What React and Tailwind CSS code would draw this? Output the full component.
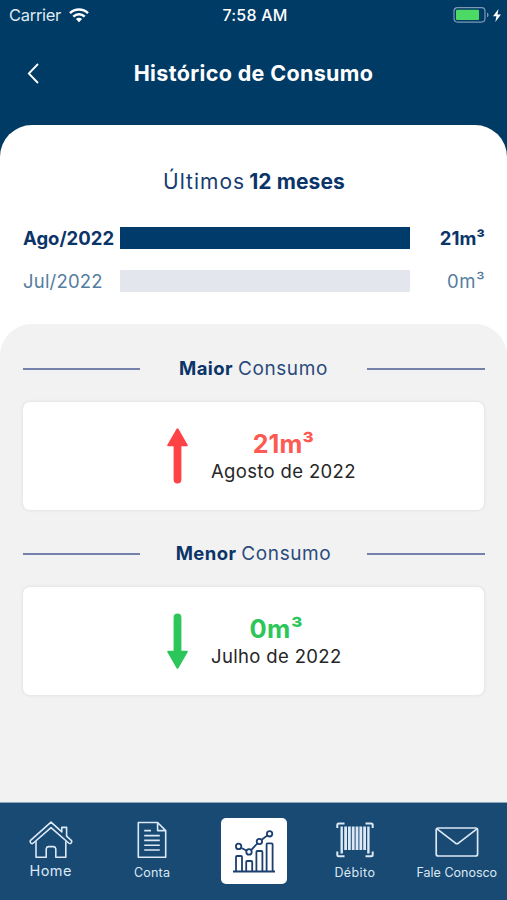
const meses = [
  { mes: "Ago/2022", valor: 21, destaque: true },
  { mes: "Jul/2022", valor: 0, destaque: false },
];

function StatusBar() {
  return (
    <div className="grid h-[30px] grid-cols-3 items-center pl-[9px] pr-[6px] text-white">
      <div className="flex items-center gap-[8px]">
        <span className="font-[Inter] text-[16.5px] leading-5 tracking-[-0.3px] text-[#dfe9f3]">Carrier</span>
        <svg width="20" height="15" viewBox="0 0 20 15" fill="none" stroke="#fff" strokeWidth="2.5">
          <path d="M1 5.2C6 .4 14 .4 19 5.2" />
          <path d="M4.3 8.6C7.5 5.5 12.5 5.5 15.7 8.6" />
          <path d="M6.9 11.1C8.7 9.4 11.3 9.4 13.1 11.1L10 14.3Z" fill="#fff" stroke="none" />
        </svg>
      </div>
      <span className="whitespace-nowrap text-center font-[Inter] text-[16px] font-medium leading-5 tracking-[0.2px]">7:58 AM</span>
      <div className="flex items-center justify-end gap-[3px]">
        <svg width="37" height="16" viewBox="0 0 37 16">
          <rect x="1" y=".7" width="31" height="14.4" rx="3.5" fill="none" stroke="#7c99b3" strokeWidth="1.2" />
          <rect x="3" y="2.7" width="23" height="10.4" rx="1" fill="#4cd964" />
          <path d="M34 5.5C36 6.3 36 9.5 34 10.3Z" fill="#7c99b3" />
        </svg>
        <svg width="8" height="13" viewBox="0 0 8 13" fill="#fff">
          <path d="M5.5 0L0 7.2H3.4L2.3 13L8 5.4H4.5Z" />
        </svg>
      </div>
    </div>
  );
}

function LinhaMes({ mes, valor, destaque }) {
  return (
    <div className="flex h-[22px] items-center">
      <span className={destaque
        ? "w-[97px] whitespace-nowrap text-[18.5px] font-bold leading-[22px] text-[#0b3568]"
        : "w-[97px] whitespace-nowrap text-[18.5px] leading-[22px] tracking-[0.2px] text-[#557d9f]"}>
        {mes}
      </span>
      <div className={destaque ? "h-[22px] w-[290px] bg-[#003b6b]" : "h-[22px] w-[290px] rounded-[1px] bg-[#e3e7ed]"} />
      <span className={destaque
        ? "flex-1 text-right text-[18.5px] font-bold leading-[22px] text-[#0b3568]"
        : "flex-1 text-right text-[18.5px] leading-[22px] tracking-[0.6px] text-[#557d9f]"}>
        {valor}m³
      </span>
    </div>
  );
}

function Divisor({ tipo }) {
  return (
    <div className="flex h-[26px] items-center justify-between pl-px">
      <div className="h-[2px] w-[117px] bg-[#7481aa]" />
      <p className="-mt-[2px] whitespace-nowrap text-[18.5px] leading-[26px] text-[#2b4b7b]">
        <b className="font-bold tracking-[0.4px] text-[#0b3568]">{tipo}</b>
        <span className="ml-[5px] text-[19px] tracking-[0.6px]">Consumo</span>
      </p>
      <div className="h-[2px] w-[118px] bg-[#7481aa]" />
    </div>
  );
}

function Seta({ baixo }) {
  return (
    <svg width="21" height="56" viewBox="0 0 21 56" className={baixo ? "rotate-180 text-[#2dc65a]" : "text-[#ff4245]"} fill="currentColor">
      <path d="M9.6.7Q10.5-.4 11.4.7L20.6 16.8Q21.2 18.2 20 18.2H14.4V51.5A3.9 3.9 0 0 1 6.6 51.5V18.2H1Q-.2 18.2.4 16.8Z" />
    </svg>
  );
}

function CardConsumo({ valor, data, baixo }) {
  return (
    <div className="flex h-[110px] items-center rounded-[8px] border border-[#e9e9ea] bg-white pl-[144px] shadow-[0_0_3px_rgba(0,0,0,0.06)]">
      <Seta baixo={baixo} />
      <div className="ml-[23px] flex flex-col items-center">
        <span className={baixo
          ? "text-[25.5px] font-bold leading-[30px] tracking-[0.3px] text-[#2dc65a]"
          : "text-[25px] font-bold leading-[30px] text-[#fc5a52]"}>
          {valor}m³
        </span>
        <span className="whitespace-nowrap text-[18.5px] leading-6 tracking-[0.35px] text-[#262626]">{data}</span>
      </div>
    </div>
  );
}

function IconeHome() {
  return (
    <svg width="44" height="38" viewBox="0 0 44 38" fill="none" stroke="#dce8f5" strokeWidth="1.6" strokeLinejoin="round">
      <path d="M22 1.2L1.3 19.7Q.8 21.2 2.2 22.4Q3.3 23 4.4 22L22 6.6L39.6 22Q40.8 23 42 22.1Q43.2 21 42.5 19.6L37.6 15.2V6.4H32.8V10.9Z" />
      <path d="M7 20.3V36.2H17.2V27.8Q17.5 25.8 19.5 25.6H24.5Q26.5 25.8 26.8 27.8V36.2H36.8V20.3" />
    </svg>
  );
}

function IconeConta() {
  return (
    <svg width="30" height="38" viewBox="0 0 30 38" fill="none" stroke="#dce8f5" strokeWidth="1.6" strokeLinejoin="round">
      <path d="M1.3 1.5H20.6L28.7 9.6V36.2H1.3ZM20.6 1.5V9.6H28.7" />
      <path d="M7.2 9.6H14M7.2 14.6H22.8M7.2 19.4H22.8M7.2 24.2H22.8M7.2 29H22.8" />
    </svg>
  );
}

function IconeGrafico() {
  return (
    <svg width="44" height="44" viewBox="0 0 44 44" fill="none" stroke="#1d3f70" strokeWidth="1.8" strokeLinejoin="round">
      <path d="M1 42.5H43" />
      <path d="M4 42V28Q4 27 5 27H9Q10 27 10 28V42M14.2 42V33Q14.2 32 15.2 32H19.2Q20.2 32 20.2 33V42M24.4 42V23Q24.4 22 25.4 22H29.4Q30.4 22 30.4 23V42M34.6 42V15.3Q34.6 14.3 35.6 14.3H39.6Q40.6 14.3 40.6 15.3V42" />
      <path d="M9 18.7L14.8 21.7M19.1 21.1L25.3 14.5M29.7 10.8L35.4 6.4" />
      <circle cx="6.6" cy="17.4" r="2.7" />
      <circle cx="17" cy="22.9" r="2.7" />
      <circle cx="27.4" cy="12.5" r="2.7" />
      <circle cx="37.6" cy="4.8" r="2.7" />
    </svg>
  );
}

function IconeCodigo() {
  return (
    <svg width="38" height="36" viewBox="0 0 38 36" fill="none" stroke="#dce8f5">
      <path strokeWidth="2" d="M1.3 6V3Q1.3 1.5 2.8 1.5H8.5M29.5 1.5H35.2Q36.7 1.5 36.7 3V6M1.3 29.5V32.8Q1.3 34.3 2.8 34.3H8.5M29.5 34.3H35.2Q36.7 34.3 36.7 32.8V29.5" />
      <path strokeWidth="2.4" d="M5.7 4.5V31.5M32.4 4.5V31.5" />
      <path strokeWidth="2.8" d="M9.6 4.5V28M13.4 4.5V28M17.2 4.5V28M21 4.5V28M24.8 4.5V28M28.6 4.5V28" />
    </svg>
  );
}

function IconeEmail() {
  return (
    <svg width="44" height="30" viewBox="0 0 44 30" fill="none" stroke="#dce8f5" strokeWidth="1.7" strokeLinejoin="round">
      <rect x="1.2" y="1" width="41.4" height="28" rx="2" />
      <path d="M2 1.8L20.5 16.2Q22 17.2 23.4 16.2L42 1.8" />
    </svg>
  );
}

export default function App() {
  return (
    <div className="flex h-[900px] w-[507px] flex-col overflow-hidden bg-[#003b66] font-[Inter,sans-serif]">
      <header className="h-[125px] shrink-0">
        <StatusBar />
        <div className="grid h-[86px] grid-cols-[1fr_auto_1fr] items-center">
          <svg className="ml-[27px]" width="12" height="21" viewBox="0 0 12 21" fill="none" stroke="#fff" strokeWidth="1.8">
            <path d="M11 1L1.8 10.5L11 20" />
          </svg>
          <h1 className="whitespace-nowrap text-[21.5px] font-bold leading-7 tracking-[0.35px] text-white">Histórico de Consumo</h1>
        </div>
      </header>

      <main className="flex flex-1 flex-col rounded-t-[32px] bg-white">
        <section className="h-[199px] pl-[23px] pr-[22px] pt-[42px]">
          <h2 className="h-[30px] text-center text-[21px] leading-[30px] text-[#173b70]">
            <span className="tracking-[1px]">Últimos</span>
            <b className="ml-[4px] font-bold tracking-[0.1px] text-[#0b3568]">12 meses</b>
          </h2>
          <div className="mt-[30px] flex flex-col gap-[21px]">
            {meses.map(m => <LinhaMes key={m.mes} {...m} />)}
          </div>
        </section>

        <section className="flex-1 rounded-t-[32px] bg-[#f2f2f2] px-[22px] pt-[32px]">
          <Divisor tipo="Maior" />
          <div className="mt-[19px]">
            <CardConsumo valor={21} data="Agosto de 2022" />
          </div>
          <div className="mt-[30px]">
            <Divisor tipo="Menor" />
          </div>
          <div className="mt-[19px]">
            <CardConsumo valor={0} data="Julho de 2022" baixo />
          </div>
        </section>
      </main>

      <nav className="grid h-[98px] shrink-0 grid-cols-5 border-t border-[#8da5bd] bg-[#184a73] text-[#dce8f5]">
        <div className="flex flex-col items-center pt-[18px]">
          <IconeHome />
          <span className="mt-[2px] text-[14.5px] leading-5 tracking-[0.5px]">Home</span>
        </div>
        <div className="flex flex-col items-center pt-[18px]">
          <IconeConta />
          <span className="mt-[4px] text-[12.5px] leading-5 tracking-[0.2px]">Conta</span>
        </div>
        <div className="flex flex-col items-center pl-[2px] pt-[15px]">
          <div className="flex h-[66px] w-[66px] items-center justify-center rounded-[5px] bg-white">
            <IconeGrafico />
          </div>
        </div>
        <div className="flex flex-col items-center pt-[19px]">
          <IconeCodigo />
          <span className="mt-[5px] text-[12.5px] leading-5 tracking-[0.4px]">Débito</span>
        </div>
        <div className="flex flex-col items-center pl-px pt-[24px]">
          <IconeEmail />
          <span className="mt-[6px] whitespace-nowrap text-[12.5px] leading-5">Fale Conosco</span>
        </div>
      </nav>
    </div>
  );
}
